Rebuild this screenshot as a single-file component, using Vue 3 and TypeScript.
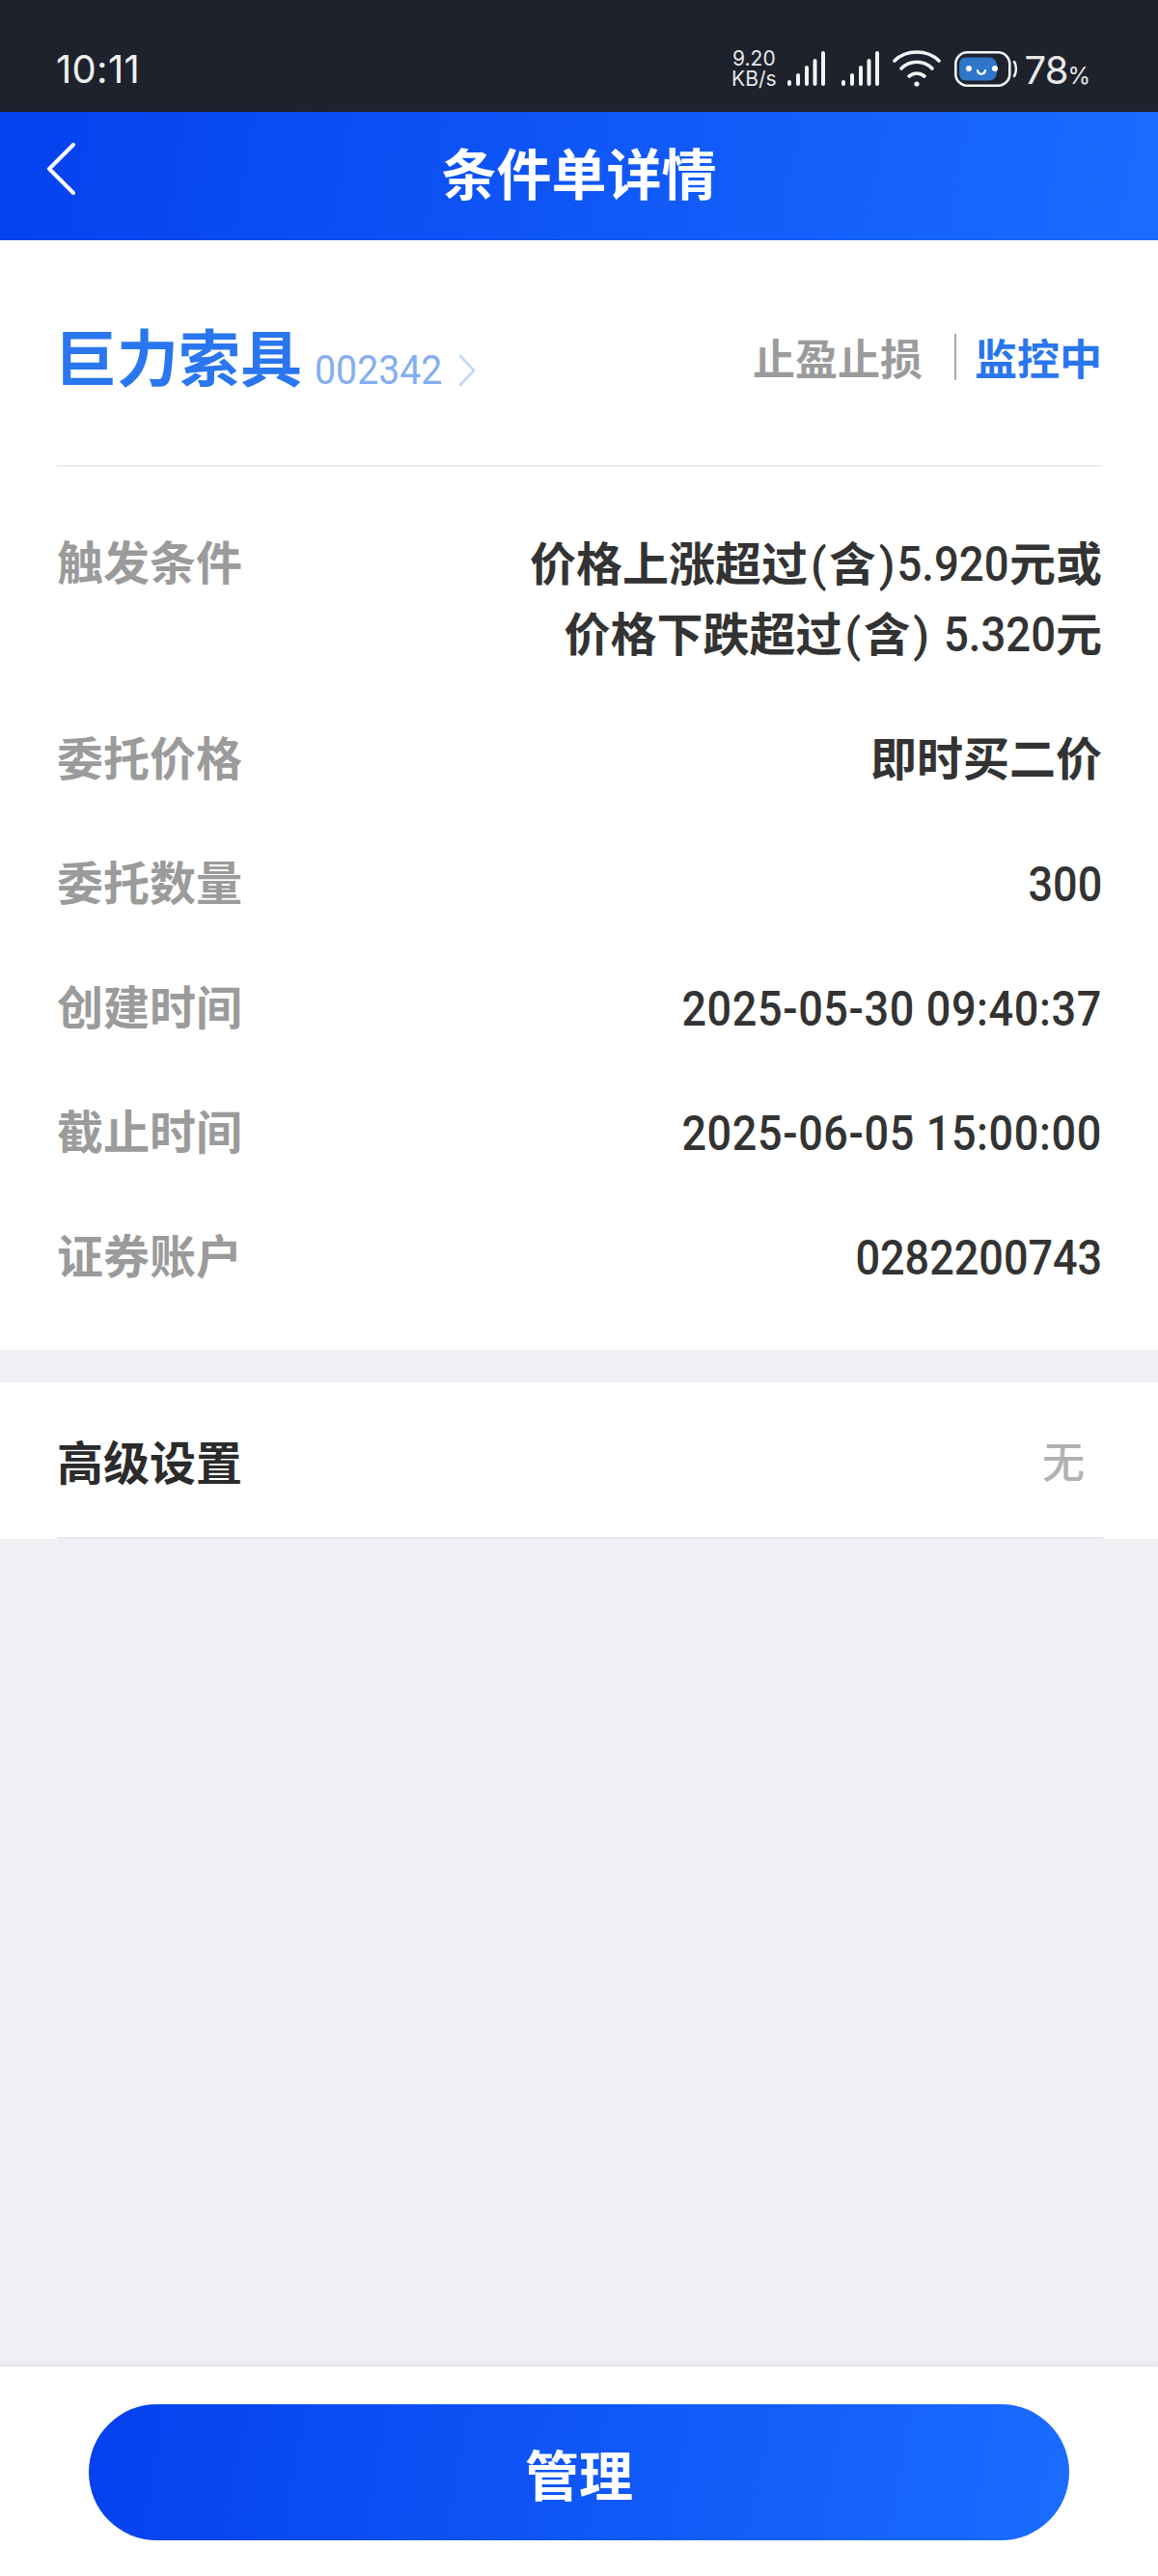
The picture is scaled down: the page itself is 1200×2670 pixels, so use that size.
<script setup lang="ts">
interface Row { label: string; lines: string[]; strong?: boolean; wide?: boolean }
const rows: Row[] = [
  { label: '触发条件', lines: ['价格上涨超过(含)5.920元或', '价格下跌超过(含) 5.320元'], strong: true },
  { label: '委托价格', lines: ['即时买二价'], strong: true },
  { label: '委托数量', lines: ['300'] },
  { label: '创建时间', lines: ['2025-05-30 09:40:37'], wide: true },
  { label: '截止时间', lines: ['2025-06-05 15:00:00'], wide: true },
  { label: '证券账户', lines: ['0282200743'] },
]
const bars = [
  { x: 0, y: 30, h: 6 },
  { x: 9, y: 23, h: 13 },
  { x: 18, y: 15, h: 21 },
  { x: 26.5, y: 8, h: 28 },
  { x: 35, y: 0, h: 36 },
]
function segments(line: string): { text: string; kind: string }[] {
  return (line.match(/[()]|[^()\u0080-\uffff]+|[\u0080-\uffff]+/g) ?? []).map((text) => ({
    text,
    kind: /^[()]$/.test(text) ? 'paren' : /^[\x00-\x7f]/.test(text) ? 'num' : 'cjk',
  }))
}
</script>

<template>
  <div class="page">
    <div class="status">
      <span class="clock">10:11</span>
      <div class="sys">
        <div class="speed"><span>9.20</span><span>KB/s</span></div>
        <svg class="sig" width="39" height="36" viewBox="0 0 39 36" fill="#f4f4f4">
          <rect v-for="b in bars" :key="b.x" :x="b.x" :y="b.y" width="4" :height="b.h" rx="2" />
        </svg>
        <svg class="sig sig2" width="39" height="36" viewBox="0 0 39 36" fill="#f4f4f4">
          <rect v-for="b in bars" :key="b.x" :x="b.x" :y="b.y" width="4" :height="b.h" rx="2" />
        </svg>
        <svg class="wifi" width="50" height="38" viewBox="0 0 50 38" fill="none" stroke="#f4f4f4" stroke-width="3.6" stroke-linecap="round">
          <path d="M2 11 C14 -1 36 -1 48 11" />
          <path d="M9 19 C18 10 32 10 41 19" />
          <path d="M17 27 C22 23 28 23 33 27" />
          <circle cx="25" cy="35" r="2.6" fill="#f4f4f4" stroke="none" />
        </svg>
        <svg class="batt" width="65" height="37" viewBox="0 0 65 37" fill="none">
          <rect x="1.3" y="1.3" width="56" height="34.4" rx="12" stroke="#f6f6f6" stroke-width="2.6" />
          <path d="M62 11 C64.5 15 64.5 22 62 26" stroke="#f4f4f4" stroke-width="2.4" stroke-linecap="round" />
          <path d="M12 6.5 H36 C42 6.5 44.5 12 44.5 18.5 C44.5 25 42 30.5 36 30.5 H12 C7 30.5 5 27 5 23 V14 C5 10 7 6.5 12 6.5 Z" fill="#2f76c8" />
          <circle cx="15" cy="18" r="3" fill="#fff" />
          <circle cx="42" cy="18" r="3" fill="#fff" />
          <path d="M24 20 C25 25 31 25 32 20" stroke="#fff" stroke-width="2.2" stroke-linecap="round" />
        </svg>
        <span class="pct">78<small>%</small></span>
      </div>
    </div>

    <header class="nav">
      <svg class="back" width="30" height="54" viewBox="0 0 30 54" fill="none" stroke="#fff" stroke-width="4" stroke-linecap="round" stroke-linejoin="round">
        <path d="M28 2 L3 27 L28 52" />
      </svg>
      <h1>条件单详情</h1>
    </header>

    <section class="card">
      <div class="head">
        <div class="stock">
          <span class="name">巨力索具</span>
          <span class="code">002342</span>
          <svg class="chev" width="18" height="34" viewBox="0 0 18 34" fill="none" stroke="#c3d8f6" stroke-width="2.6" stroke-linecap="round" stroke-linejoin="round">
            <path d="M2 2 L16 17 L2 32" />
          </svg>
        </div>
        <div class="state">
          <span class="kind">止盈止损</span>
          <i class="sep"></i>
          <span class="watch">监控中</span>
        </div>
      </div>
      <div class="rows">
        <div v-for="r in rows" :key="r.label" class="row">
          <span class="label">{{ r.label }}</span>
          <div class="value" :class="{ strong: r.strong, wide: r.wide }">
            <div v-for="l in r.lines" :key="l">
              <span v-for="(s, i) in segments(l)" :key="i" :class="s.kind">{{ s.text }}</span>
            </div>
          </div>
        </div>
      </div>
    </section>

    <section class="adv">
      <div class="adv-in">
        <span class="adv-t">高级设置</span>
        <span class="adv-v">无</span>
      </div>
    </section>

    <div class="spacer"></div>

    <footer class="foot">
      <button class="btn">管理</button>
    </footer>
  </div>
</template>

<style>
html, body { margin: 0; padding: 0; background: #efeff4; }
</style>

<style scoped>
.page {
  width: 1200px;
  height: 2670px;
  display: flex;
  flex-direction: column;
  background: #efeff4;
  font-family: Roboto, "Noto Sans CJK SC", sans-serif;
  overflow: hidden;
}
.status {
  height: 116px;
  flex: none;
  box-sizing: border-box;
  padding: 48px 70px 0 58px;
  background: #1e222d;
  display: flex;
  justify-content: space-between;
  align-items: flex-start;
  color: #f0f0f0;
}
.clock { font-size: 40px; line-height: 48px; font-weight: 400; font-family: Inter, sans-serif; letter-spacing: 0.3px; }
.sys { display: flex; align-items: center; height: 46px; }
.speed {
  display: flex;
  flex-direction: column;
  align-items: center;
  font-family: Inter, sans-serif;
  font-size: 21px;
  line-height: 21px;
  color: #e8e8e8;
  margin-right: 11px;
}
.sig { margin-right: 17px; }
.sig2 { margin-right: 14px; }
.wifi { margin-right: 14px; }
.batt { margin-right: 8px; }
.pct { font-family: Inter, sans-serif; font-size: 40px; line-height: 46px; color: #e8e8e8; letter-spacing: -1px; padding-top: 10px; }
.pct small { font-size: 24px; margin-left: 0; letter-spacing: 0; }
.nav {
  height: 133px;
  flex: none;
  position: relative;
  display: flex;
  align-items: center;
  justify-content: center;
  background: linear-gradient(100deg, #0541ee 0%, #1a6cff 100%);
}
.nav h1 {
  margin: 0;
  color: #fff;
  font-size: 57px;
  line-height: 76px;
  font-weight: 700;
}
.back { position: absolute; left: 48px; top: 32px; }
.card {
  flex: none;
  height: 1150px;
  box-sizing: border-box;
  padding: 0 58px 0 59px;
  background: #fff;
}
.head {
  height: 235px;
  box-sizing: border-box;
  border-bottom: 2px solid #ededf0;
  display: flex;
  justify-content: space-between;
  padding-top: 85px;
}
.stock { display: flex; align-items: flex-end; height: 80px; margin-left: -2px; }
.name { font-size: 64px; line-height: 80px; font-weight: 700; color: #2a76ee; }
.code {
  font-size: 42px;
  line-height: 61px;
  color: #84aef0;
  margin: 0 -9px 0 13px;
  transform: scaleX(0.935);
  transform-origin: left center;
}
.chev { margin: 0 0 13px 16px; }
.state { display: flex; align-items: center; height: 60px; margin-top: 6px; font-size: 44px; font-weight: 700; }
.kind { color: #9b9b9b; }
.sep { width: 2px; height: 48px; background: #aaa; margin: 0 19px 0 33px; }
.watch { color: #2a76ee; }
.rows { padding-top: 65px; display: flex; flex-direction: column; gap: 57px; }
.row { display: flex; justify-content: space-between; align-items: flex-start; }
.label { font-size: 48px; line-height: 72px; font-weight: 700; color: #9b9b9b; }
.value {
  text-align: right;
  font-size: 50px;
  line-height: 72px;
  font-weight: 500;
  color: #333;
  transform: scaleX(0.9);
  transform-origin: right center;
}
.value.wide { letter-spacing: 0.7px; }
.value.strong { font-size: 48px; font-weight: 700; transform: none; }
.value.strong .paren { font-weight: 500; padding: 0 3px; }
.value.strong .num {
  display: inline-block;
  font-size: 50px;
  font-weight: 500;
  white-space: pre;
  margin-left: -12px;
  transform: scaleX(0.91);
  transform-origin: right center;
}
.adv { margin-top: 34px; flex: none; height: 162px; background: #fff; padding: 0 56px 0 59px; }
.adv-in {
  height: 160px;
  border-bottom: 2px solid #e9e9ec;
  display: flex;
  justify-content: space-between;
  align-items: center;
  padding-right: 20px;
}
.adv-t { font-size: 48px; font-weight: 700; color: #2b2b2b; }
.adv-v { font-size: 44px; color: #b2b2b2; font-weight: 500; }
.spacer { flex: 1; }
.foot {
  flex: none;
  height: 217px;
  box-sizing: border-box;
  background: #fff;
  padding: 39px 92px 0;
  box-shadow: 0 -3px 6px rgba(0,0,0,0.05);
}
.btn {
  display: block;
  width: 100%;
  height: 141px;
  border: none;
  border-radius: 71px;
  background: linear-gradient(100deg, #0541ee 0%, #1a6cff 100%);
  color: #fff;
  font-family: "Noto Sans CJK SC", sans-serif;
  font-size: 56px;
  font-weight: 700;
  padding: 0;
}
</style>
